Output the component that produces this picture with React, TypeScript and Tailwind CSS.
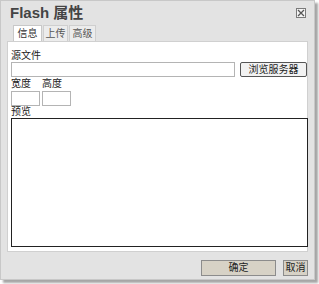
const font = { fontFamily: '"Liberation Sans", "Noto Sans CJK SC", sans-serif' };

export default function App() {
  return (
    <div className="w-[319px] h-[284px] bg-white" style={font}>
      <div className="w-[315px] h-[280px] bg-[#e3e3e3] border border-[#c8c8c8] shadow-[3px_3px_2px_rgba(0,0,0,0.35)] flex flex-col">
        {/* title */}
        <div className="flex items-start justify-between h-[24px] pl-[9px] pr-[8px]">
          <h1 className="text-[15px] leading-[18px] font-bold text-[#444] mt-[3px]">Flash 属性</h1>
          <button className="mt-[7px] w-[10px] h-[10px] border border-[#7a7a7a] bg-[#f4f4f4] flex items-center justify-center">
            <svg width="8" height="8" viewBox="0 0 8 8">
              <path d="M1 1L7 7M7 1L1 7" stroke="#555" strokeWidth="1.3" />
            </svg>
          </button>
        </div>
        {/* tabs */}
        <div className="flex gap-[1px] pl-[12px] h-[16px] text-[10px] leading-[15px] text-[#333]">
          <div className="w-[29px] bg-white border border-b-0 border-[#c8c8c8] text-center">信息</div>
          <div className="w-[25px] bg-[#ececec] border border-b-0 border-[#cfcfcf] text-center text-[#555]">上传</div>
          <div className="w-[27px] bg-[#ececec] border border-b-0 border-[#cfcfcf] text-center text-[#555]">高级</div>
        </div>
        {/* content */}
        <div className="mx-[6px] h-[211px] bg-white border border-[#d0d0d0] pl-[3px] pt-[8px] text-[10px] leading-[12px] text-[#222]">
          <div>源文件</div>
          <div className="flex items-center gap-[5px]">
            <input className="w-[225px] h-[15px] border border-[#b4b4b4] outline-none" />
            <button className="w-[67px] h-[15px] border border-[#555] rounded-[2px] bg-[#f2f2f2] text-[10px] leading-[12px] text-[#222]">浏览服务器</button>
          </div>
          <div className="flex gap-[2px] mt-[1px]">
            <div className="w-[29px]">
              <div className="mb-[1px]">宽度</div>
              <input className="w-[29px] h-[15px] border border-[#b4b4b4] outline-none" />
            </div>
            <div className="w-[29px]">
              <div className="mb-[1px]">高度</div>
              <input className="w-[29px] h-[15px] border border-[#b4b4b4] outline-none" />
            </div>
          </div>
          <div>预览</div>
          <div className="w-[297px] h-[129px] border border-[#222]" />
        </div>
        {/* footer */}
        <div className="flex-1 flex items-start justify-end gap-[7px] pt-[8px] pr-[6px] text-[10px] text-[#222]">
          <button className="w-[75px] h-[16px] bg-[#d7d2c6] border border-[#8c8c8c] leading-[12px]">确定</button>
          <button className="w-[25px] h-[16px] bg-[#d7d2c6] border border-[#8c8c8c] leading-[12px]">取消</button>
        </div>
      </div>
    </div>
  );
}
